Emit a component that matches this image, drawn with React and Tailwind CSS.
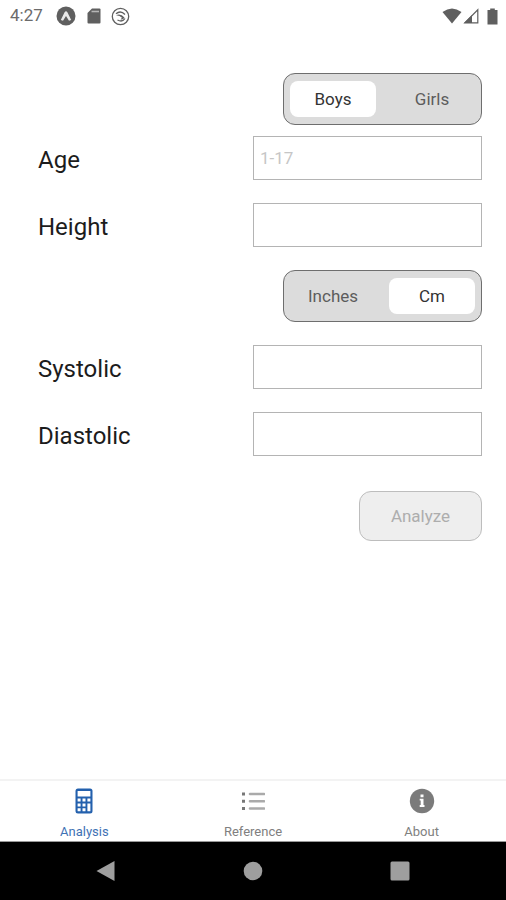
import React, { useState } from 'react';

const StatusBar = () => (
  <header className="flex h-8 items-center justify-between pl-[10px] pr-2 text-[#5f5f5f]">
    <div className="flex items-center">
      <span className="w-[46px] text-[17px] text-[#6b6b6b]">4:27</span>
      <svg width="20" height="20" viewBox="0 0 20 20" aria-hidden="true">
        <circle cx="10" cy="10" r="9.5" fill="currentColor" />
        <path d="M4.8 14 L8.6 6.2 Q10 4.4 11.4 6.2 L15.2 14 L13 14.8 L10 10 L7 14.8 Z" fill="#e8e8e8" />
      </svg>
      <svg className="ml-[11px]" width="14" height="16" viewBox="0 0 14 16" aria-hidden="true">
        <path d="M5 0.5 H12.5 Q13.5 0.5 13.5 1.5 V14.5 Q13.5 15.5 12.5 15.5 H1.5 Q0.5 15.5 0.5 14.5 V5 Z" fill="currentColor" />
        <path d="M4.5 3.5 H12" stroke="#b5b5b5" strokeWidth="1.6" />
      </svg>
      <svg className="ml-[10px]" width="19" height="19" viewBox="0 0 19 19" fill="none" stroke="currentColor" aria-hidden="true">
        <circle cx="9.5" cy="9.5" r="8.2" strokeWidth="1.3" />
        <path d="M5 6.8 Q9.5 2.8 14 7.5 M14 11.5 Q11.5 15.5 6.5 13" strokeWidth="1.3" />
        <path d="M5 8.2 Q9.5 5.8 13.5 10.5 Q12 13.2 9.5 12.4 L11 10.8 Q9 8.5 5 8.2 Z" fill="currentColor" stroke="none" />
      </svg>
    </div>
    <div className="flex items-center">
      <svg width="20" height="16" viewBox="0 0 20 16" aria-hidden="true">
        <path d="M0.5 4 Q10 -3 19.5 4 L10 15.5 Z" fill="currentColor" />
      </svg>
      <svg className="ml-px" width="16" height="16" viewBox="0 0 16 16" aria-hidden="true">
        <path d="M1.8 14.8 H14.8 V1.8 Z" fill="none" stroke="currentColor" strokeWidth="1.2" />
        <path d="M1 15 H9 V7 Z" fill="currentColor" />
      </svg>
      <svg className="ml-2" width="11" height="17" viewBox="0 0 11 17" aria-hidden="true">
        <path d="M3.2 0.5 H7.8 V2 H10.5 V16.5 H0.5 V2 H3.2 Z" fill="currentColor" />
      </svg>
    </div>
  </header>
);

const Toggle = ({ label, options, value, onChange }) => (
  <div
    role="group"
    aria-label={label}
    className="ml-auto mr-6 grid h-[52px] w-[199px] grid-cols-2 gap-[13px] rounded-xl border border-[#6e6e6e] bg-[#dcdcdc] px-[6px] py-[7px]"
  >
    {options.map((option) => (
      <button
        key={option}
        type="button"
        aria-pressed={value === option}
        onClick={() => onChange(option)}
        className={
          value === option
            ? 'rounded-lg bg-white pt-[2px] text-[17px] text-[#333]'
            : 'rounded-lg pt-[2px] text-[17px] text-[#5c5c5c]'
        }
      >
        {option}
      </button>
    ))}
  </div>
);

const Field = ({ id, label, placeholder, value, onChange }) => (
  <div className="grid grid-cols-2 items-center">
    <label htmlFor={id} className="pl-[38px] pt-[3px] text-2xl text-[#1c1c1c]">
      {label}
    </label>
    <input
      type="text"
      inputMode="numeric"
      id={id}
      name={id}
      placeholder={placeholder}
      value={value}
      onChange={onChange}
      className="mr-6 h-11 border border-[#b4b4b4] bg-white px-[6px] text-[17px] placeholder:text-[#c6c6c6]"
    />
  </div>
);

const CalculatorIcon = () => (
  <svg width="18" height="26" viewBox="0 0 18 26" aria-hidden="true">
    <rect x="0.5" y="0.5" width="17" height="25" rx="2.5" fill="#2360ad" />
    <path
      d="M2.6 3 H15.4 V8.4 H2.6 Z M2.6 10.5 H5.6 V13.5 H2.6 Z M7.5 10.5 H10.5 V13.5 H7.5 Z M12.4 10.5 H15.4 V13.5 H12.4 Z M2.6 15.5 H5.6 V18.5 H2.6 Z M7.5 15.5 H10.5 V18.5 H7.5 Z M12.4 15.5 H15.4 V23.2 H12.4 Z M2.6 20.3 H5.6 V23.2 H2.6 Z M7.5 20.3 H10.5 V23.2 H7.5 Z"
      fill="#fff"
    />
  </svg>
);

const ListIcon = () => (
  <svg width="24" height="26" viewBox="0 0 24 26" aria-hidden="true">
    <path d="M1 4.5 H4 V7.5 H1 Z M1 11.7 H4 V14.7 H1 Z M1 19 H4 V22 H1 Z" fill="#777" />
    <path d="M9 6 H23 M9 13.2 H23 M9 20.5 H23" stroke="#aaa" strokeWidth="2.6" strokeLinecap="round" />
  </svg>
);

const InfoIcon = () => (
  <svg width="26" height="26" viewBox="0 0 26 26" aria-hidden="true">
    <circle cx="13" cy="13" r="12.2" fill="#7b7b7b" />
    <path d="M11.5 6.5 H14.5 V9.2 H11.5 Z M10.7 10.8 H14.5 V17 H15.5 V19 H10.7 V17 H11.7 V12.6 H10.7 Z" fill="#fff" />
  </svg>
);

const tabs = [
  { name: 'Analysis', icon: CalculatorIcon },
  { name: 'Reference', icon: ListIcon },
  { name: 'About', icon: InfoIcon },
];

const TabBar = () => (
  <nav className="grid h-[63px] grid-cols-3 border-b border-t-2 border-b-[#999] border-t-[#f3f3f3]">
    {tabs.map(({ name, icon: Icon }) => (
      <a
        key={name}
        href={`#${name.toLowerCase()}`}
        className={
          name === 'Analysis'
            ? 'flex flex-col items-center gap-2 pt-[7px] text-[13px] leading-5 text-[#3f72b5]'
            : 'flex flex-col items-center gap-2 pt-[7px] text-[13px] leading-5 text-[#808080]'
        }
      >
        <Icon />
        {name}
      </a>
    ))}
  </nav>
);

const NavigationBar = () => (
  <footer className="flex h-[58px] items-center justify-between bg-black px-24 text-[#9e9e9e]">
    <button type="button" aria-label="Back">
      <svg width="20" height="22" viewBox="0 0 20 22" aria-hidden="true">
        <path d="M0.5 11 L18.5 1 V21 Z" fill="currentColor" />
      </svg>
    </button>
    <button type="button" aria-label="Home">
      <svg width="20" height="20" viewBox="0 0 20 20" aria-hidden="true">
        <circle cx="10" cy="10" r="9.3" fill="currentColor" />
      </svg>
    </button>
    <button type="button" aria-label="Recent apps">
      <svg width="20" height="20" viewBox="0 0 20 20" aria-hidden="true">
        <rect x="0.5" y="0.5" width="19" height="19" rx="1.5" fill="currentColor" />
      </svg>
    </button>
  </footer>
);

const App = () => {
  const [gender, setGender] = useState('Boys');
  const [unit, setUnit] = useState('Cm');
  const [formData, setFormData] = useState({
    age: '',
    height: '',
    systolic: '',
    diastolic: '',
  });

  const handleChange = (e) => {
    setFormData({
      ...formData,
      [e.target.name]: e.target.value,
    });
  };

  // Every reading is needed before the analysis can run
  const isComplete = Object.values(formData).every((value) => value !== '');

  return (
    <div className="flex min-h-screen flex-col bg-white font-[Roboto,sans-serif]">
      <StatusBar />
      <main className="flex-1 pt-[41px]">
        <form onSubmit={(e) => e.preventDefault()} className="flex flex-col gap-[23px]">
          <div className="flex flex-col gap-[11px]">
            <Toggle label="Gender" options={['Boys', 'Girls']} value={gender} onChange={setGender} />
            <Field id="age" label="Age" placeholder="1-17" value={formData.age} onChange={handleChange} />
          </div>
          <Field id="height" label="Height" value={formData.height} onChange={handleChange} />
          <Toggle label="Height unit" options={['Inches', 'Cm']} value={unit} onChange={setUnit} />
          <Field id="systolic" label="Systolic" value={formData.systolic} onChange={handleChange} />
          <Field id="diastolic" label="Diastolic" value={formData.diastolic} onChange={handleChange} />
          <button
            type="submit"
            disabled={!isComplete}
            className="ml-auto mr-6 mt-3 h-[50px] w-[123px] rounded-xl border border-[#333] bg-[#dcdcdc] pt-[2px] text-[17px] text-[#333] disabled:border-[#bdbdbd] disabled:bg-[#eee] disabled:text-[#adadad]"
          >
            Analyze
          </button>
        </form>
      </main>
      <TabBar />
      <NavigationBar />
    </div>
  );
};

export default App;
